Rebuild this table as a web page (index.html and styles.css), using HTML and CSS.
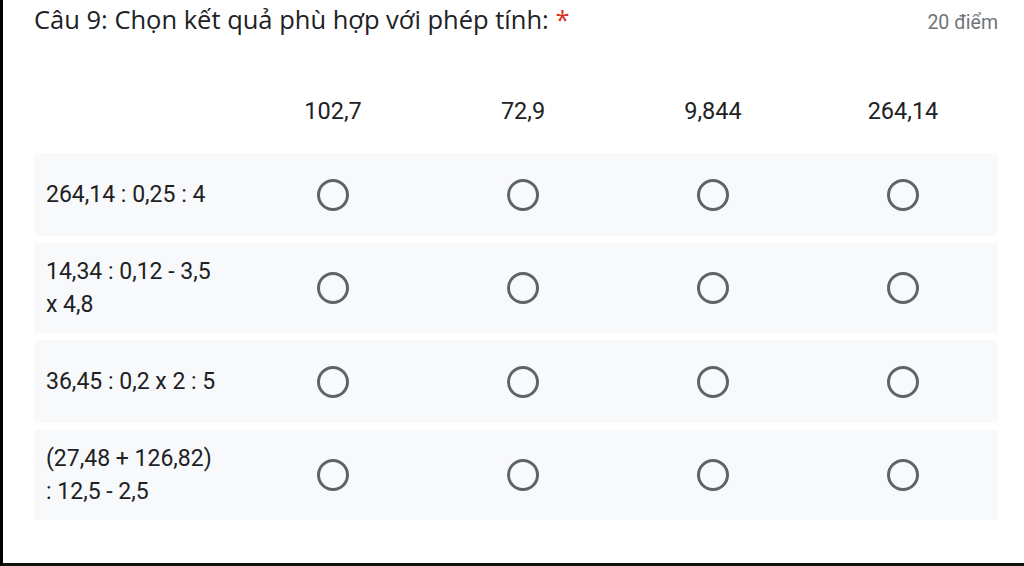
FILE: index.html
```html
<!DOCTYPE html>
<html lang="vi">
<head>
<meta charset="utf-8">
<title>Câu 9</title>
<link rel="stylesheet" href="styles.css">
</head>
<body>
<div class="frame">
  <div class="question">
    <div class="q-head">
      <div class="q-title">Câu 9: Chọn kết quả phù hợp với phép tính: <span class="req">*</span></div>
      <div class="q-points">20 điểm</div>
    </div>
    <div class="grid">
      <div class="col-head"></div>
      <div class="col-head">102,7</div>
      <div class="col-head">72,9</div>
      <div class="col-head">9,844</div>
      <div class="col-head">264,14</div>
    </div>
    <div class="rows">
      <div class="grid row">
        <div class="label">264,14 : 0,25 : 4</div>
        <div class="cell"><span class="radio"></span></div>
        <div class="cell"><span class="radio"></span></div>
        <div class="cell"><span class="radio"></span></div>
        <div class="cell"><span class="radio"></span></div>
      </div>
      <div class="grid row">
        <div class="label">14,34 : 0,12 - 3,5 x 4,8</div>
        <div class="cell"><span class="radio"></span></div>
        <div class="cell"><span class="radio"></span></div>
        <div class="cell"><span class="radio"></span></div>
        <div class="cell"><span class="radio"></span></div>
      </div>
      <div class="grid row">
        <div class="label">36,45 : 0,2 x 2 : 5</div>
        <div class="cell"><span class="radio"></span></div>
        <div class="cell"><span class="radio"></span></div>
        <div class="cell"><span class="radio"></span></div>
        <div class="cell"><span class="radio"></span></div>
      </div>
      <div class="grid row">
        <div class="label">(27,48 + 126,82) : 12,5 - 2,5</div>
        <div class="cell"><span class="radio"></span></div>
        <div class="cell"><span class="radio"></span></div>
        <div class="cell"><span class="radio"></span></div>
        <div class="cell"><span class="radio"></span></div>
      </div>
    </div>
  </div>
</div>
</body>
</html>
```

FILE: styles.css
```css
* { box-sizing: border-box; }
html, body { margin: 0; padding: 0; background: #fff; }
body { font-family: Roboto, "Liberation Sans", sans-serif; color: #202124; }
.frame {
  width: 1024px;
  height: 566px;
  border-left: 3px solid #000;
  border-bottom: 3px solid #111;
  padding: 0 26px 0 31px;
  overflow: hidden;
}
.question { width: 964px; }
.q-head {
  display: flex;
  justify-content: space-between;
  align-items: baseline;
  height: 44px;
  padding-top: 2px;
}
.q-title {
  font-family: "Open Sans", Roboto, sans-serif;
  font-size: 25.5px;
  color: #202124;
}
.req { color: #d93025; }
.q-points {
  font-size: 19.5px;
  color: #70757a;
}
.grid {
  display: grid;
  grid-template-columns: 204px repeat(4, 190px);
  align-items: center;
}
.col-head {
  height: 60px;
  margin-top: 37px;
  margin-bottom: 12px;
  display: flex;
  align-items: center;
  justify-content: center;
  font-size: 23.5px;
}
.rows { display: flex; flex-direction: column; gap: 7px; }
.row {
  background: #f8f9fa;
  border-radius: 4px;
  min-height: 83px;
}
.label {
  padding: 12px 21px 12px 12px;
  font-size: 23px;
  line-height: 33px;
}
.cell { display: flex; justify-content: center; align-items: center; }
.radio {
  width: 32px;
  height: 32px;
  border-radius: 50%;
  border: 3px solid #5f6368;
}
```
